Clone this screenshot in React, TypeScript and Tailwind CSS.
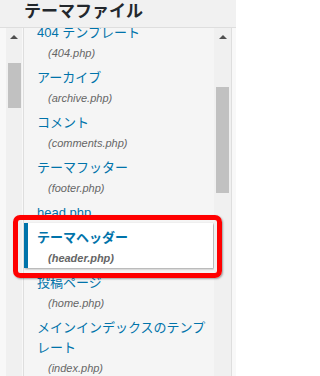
import React from "react";

type Item = { label: string; file?: string; sel?: boolean };

const items: Item[] = [
  { label: "404 テンプレート", file: "(404.php)" },
  { label: "アーカイブ", file: "(archive.php)" },
  { label: "コメント", file: "(comments.php)" },
  { label: "テーマフッター", file: "(footer.php)" },
  { label: "head.php" },
  { label: "テーマヘッダー", file: "(header.php)", sel: true },
  { label: "投稿ページ", file: "(home.php)" },
  { label: "メインインデックスのテンプレート", file: "(index.php)" },
  { label: "固定ページテンプレート", file: "(page.php)" },
];

function Arrow() {
  return (
    <div className="h-[17px] flex items-center justify-center">
      <div className="w-0 h-0 border-l-[4px] border-r-[4px] border-b-[4px] border-l-transparent border-r-transparent border-b-[#505050]" />
    </div>
  );
}

export default function App() {
  return (
    <div className="relative w-[236px] h-[376px] overflow-hidden bg-[#f1f1f1] font-['Liberation_Sans','Noto_Sans_CJK_JP',sans-serif]">
      <div className="h-[28px] border-b border-[#dedede] pl-[24px]">
        <h2 className="text-[17px] leading-[24px] font-bold text-[#23282d]">テーマファイル</h2>
      </div>
      <div className="flex h-[348px]">
        <div className="w-[23px] flex bg-[#f8f8f8]">
          <div className="ml-[6px] w-[16px] bg-[#f0f0f0] flex flex-col">
            <Arrow />
            <div className="mt-[18px] ml-[2px] w-[13px] h-[45px] bg-[#c1c1c1]" />
          </div>
        </div>
        <div className="flex border-l border-r border-[#dedede]">
          <div className="w-[190px] overflow-hidden bg-[#f5f5f5]">
            <div className="-mt-[10px]">
              {items.map((it) => (
                <div
                  key={it.label}
                  className={
                    it.sel
                      ? "pt-[5px] mr-[1px] bg-white border-l-4 border-[#0073aa] pl-[9px] shadow-[1px_1px_2px_rgba(0,0,0,0.35)] font-semibold"
                      : "pt-[5px] pl-[13px]"
                  }
                >
                  <div className="text-[13px] leading-[20px] text-[#0073aa] pr-[2px]">{it.label}</div>
                  {it.file && (
                    <div className="pl-[11px] text-[11px] leading-[20px] italic text-[#666]">{it.file}</div>
                  )}
                </div>
              ))}
            </div>
          </div>
          <div className="w-[17px] bg-[#f0f0f0] flex flex-col">
            <Arrow />
            <div className="mt-[42px] ml-[2px] w-[13px] h-[106px] bg-[#c1c1c1]" />
          </div>
        </div>
        <div className="w-[4px] bg-[#f8f8f8]" />
      </div>
      <div className="absolute left-[13px] top-[215px] w-[209px] h-[63px] border-[5px] border-[#ff0000] rounded-[7px] shadow-[1px_1px_2px_rgba(0,0,0,0.35)]" />
    </div>
  );
}
